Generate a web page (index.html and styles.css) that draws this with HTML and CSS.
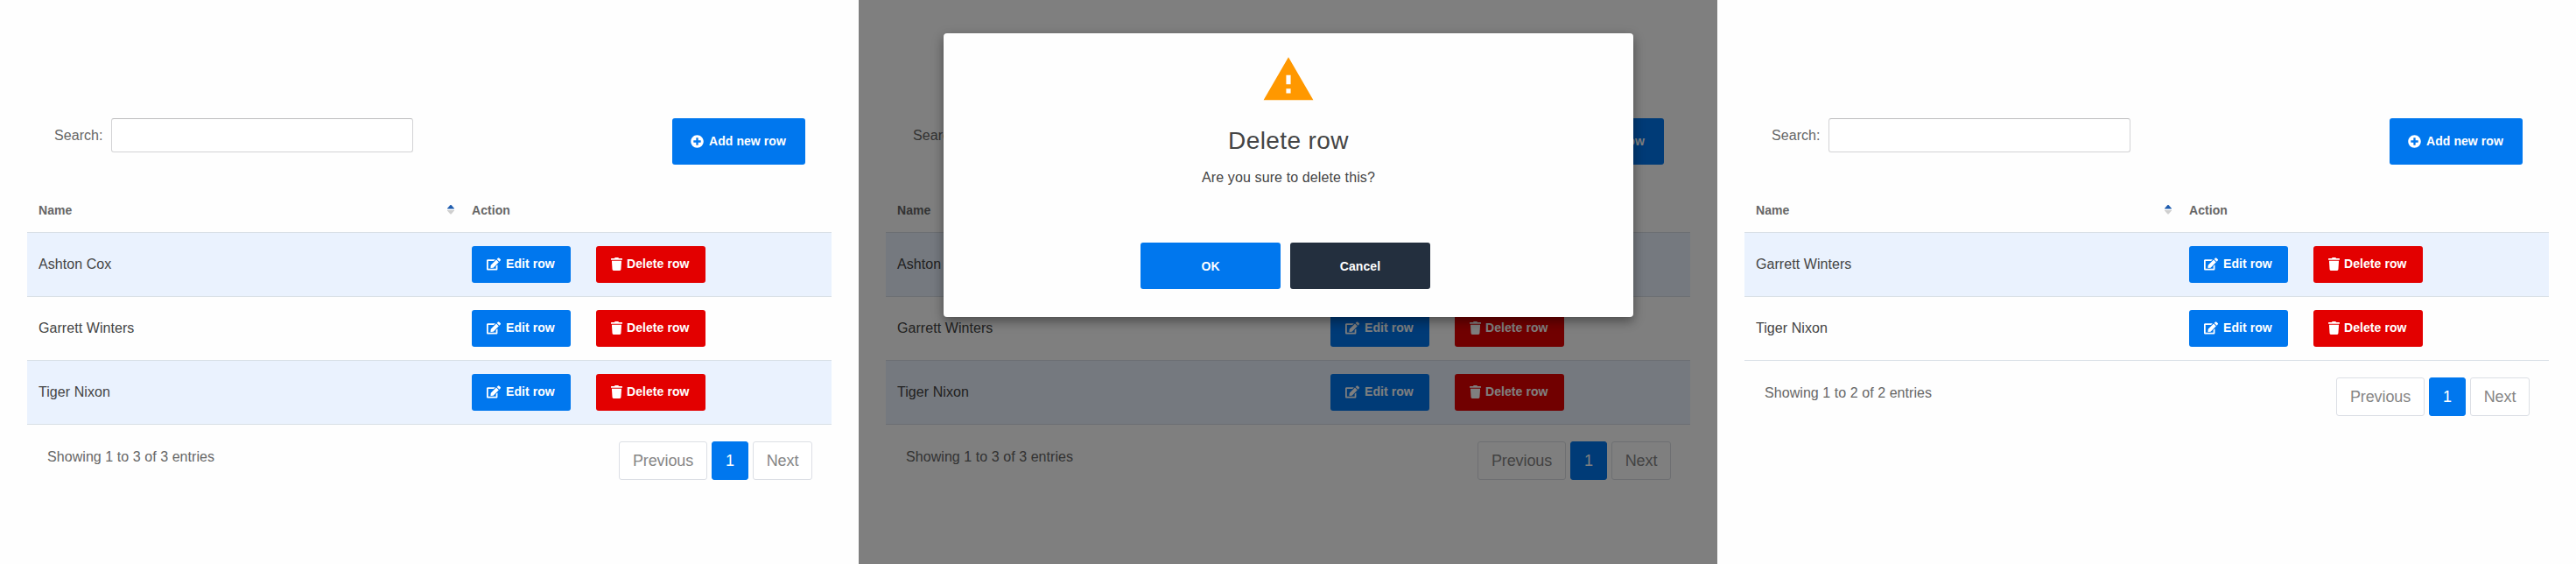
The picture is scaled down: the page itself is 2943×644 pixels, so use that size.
FILE: index.html
```html
<!DOCTYPE html>
<html lang="en">
<head>
<meta charset="utf-8">
<title>Delete row</title>
<link rel="stylesheet" href="styles.css">
</head>
<body>
<svg class="sprite" aria-hidden="true">
  <symbol id="plus" viewBox="0 0 512 512"><path fill="currentColor" d="M256 8C119 8 8 119 8 256s111 248 248 248 248-111 248-248S393 8 256 8zm144 276c0 6.600-5.400 12-12 12h-92v92c0 6.600-5.400 12-12 12h-56c-6.600 0-12-5.400-12-12v-92h-92c-6.600 0-12-5.400-12-12v-56c0-6.600 5.400-12 12-12h92v-92c0-6.600 5.400-12 12-12h56c6.600 0 12 5.400 12 12v92h92c6.600 0 12 5.400 12 12v56z"/></symbol>
  <symbol id="edit" viewBox="0 0 576 512"><path fill="currentColor" d="M402.600 83.200l90.200 90.200c3.800 3.800 3.800 10 0 13.800L274.400 405.600l-92.800 10.300c-12.400 1.400-22.900-9.100-21.500-21.500l10.300-92.800L388.800 83.200c3.800-3.800 10-3.800 13.800 0zm162-22.900l-48.800-48.800c-15.200-15.200-39.900-15.200-55.200 0l-35.400 35.400c-3.800 3.800-3.800 10 0 13.800l90.200 90.200c3.800 3.800 10 3.800 13.800 0l35.400-35.400c15.200-15.300 15.200-40 0-55.200zM384 346.200V448H64V128h229.800c3.200 0 6.200-1.300 8.500-3.500l40-40c7.600-7.600 2.200-20.500-8.500-20.500H48C21.500 64 0 85.500 0 112v352c0 26.500 21.500 48 48 48h352c26.500 0 48-21.500 48-48V306.200c0-10.700-12.900-16-20.500-8.500l-40 40c-2.200 2.300-3.500 5.300-3.500 8.500z"/></symbol>
  <symbol id="trash" viewBox="0 0 448 512"><path fill="currentColor" d="M432 32H312l-9.400-18.700A24 24 0 0 0 281.100 0H166.800a23.700 23.700 0 0 0-21.400 13.300L136 32H16A16 16 0 0 0 0 48v32a16 16 0 0 0 16 16h416a16 16 0 0 0 16-16V48a16 16 0 0 0-16-16zM53.200 467a48 48 0 0 0 47.900 45h245.800a48 48 0 0 0 47.900-45L416 128H32z"/></symbol>
  <symbol id="sort" viewBox="0 0 8 11"><path fill="#1f5cae" d="M0 4.500 V4 L3.500 0 H4.500 L8 4 V4.500z"/><path fill="#cfcfcf" d="M0 6 H8 V6.600 L4.500 10.600 H3.500 L0 6.600z"/></symbol>
  <symbol id="warning" viewBox="0 0 24 24"><path fill="#ff9800" d="M1 21h22L12 2 1 21zm12-3h-2v-2h2v2zm0-4h-2v-4h2v4z"/></symbol>
</svg>
<main class="steps">
  <section class="panel">
    <div class="toolbar">
      <label class="search">Search:<input class="search-input" type="text"></label>
      <button class="btn btn-add"><svg class="i-plus"><use href="#plus"/></svg>Add new row</button>
    </div>
    <table class="grid">
      <thead><tr><th class="col-name"><div class="sortable">Name<svg class="i-sort"><use href="#sort"/></svg></div></th><th>Action</th></tr></thead>
      <tbody>
        <tr><td>Ashton Cox</td><td><div class="actions"><button class="btn btn-edit"><svg class="i-edit"><use href="#edit"/></svg>Edit row</button><button class="btn btn-delete"><svg class="i-trash"><use href="#trash"/></svg>Delete row</button></div></td></tr>
        <tr><td>Garrett Winters</td><td><div class="actions"><button class="btn btn-edit"><svg class="i-edit"><use href="#edit"/></svg>Edit row</button><button class="btn btn-delete"><svg class="i-trash"><use href="#trash"/></svg>Delete row</button></div></td></tr>
        <tr><td>Tiger Nixon</td><td><div class="actions"><button class="btn btn-edit"><svg class="i-edit"><use href="#edit"/></svg>Edit row</button><button class="btn btn-delete"><svg class="i-trash"><use href="#trash"/></svg>Delete row</button></div></td></tr>
      </tbody>
    </table>
    <div class="footer">
      <div class="info">Showing 1 to 3 of 3 entries</div>
      <nav class="pager"><span class="page prev">Previous</span><span class="page current">1</span><span class="page next">Next</span></nav>
    </div>
  </section>

  <section class="panel">
    <div class="toolbar">
      <label class="search">Search:<input class="search-input" type="text"></label>
      <button class="btn btn-add"><svg class="i-plus"><use href="#plus"/></svg>Add new row</button>
    </div>
    <table class="grid">
      <thead><tr><th class="col-name"><div class="sortable">Name<svg class="i-sort"><use href="#sort"/></svg></div></th><th>Action</th></tr></thead>
      <tbody>
        <tr><td>Ashton Cox</td><td><div class="actions"><button class="btn btn-edit"><svg class="i-edit"><use href="#edit"/></svg>Edit row</button><button class="btn btn-delete"><svg class="i-trash"><use href="#trash"/></svg>Delete row</button></div></td></tr>
        <tr><td>Garrett Winters</td><td><div class="actions"><button class="btn btn-edit"><svg class="i-edit"><use href="#edit"/></svg>Edit row</button><button class="btn btn-delete"><svg class="i-trash"><use href="#trash"/></svg>Delete row</button></div></td></tr>
        <tr><td>Tiger Nixon</td><td><div class="actions"><button class="btn btn-edit"><svg class="i-edit"><use href="#edit"/></svg>Edit row</button><button class="btn btn-delete"><svg class="i-trash"><use href="#trash"/></svg>Delete row</button></div></td></tr>
      </tbody>
    </table>
    <div class="footer">
      <div class="info">Showing 1 to 3 of 3 entries</div>
      <nav class="pager"><span class="page prev">Previous</span><span class="page current">1</span><span class="page next">Next</span></nav>
    </div>
    <div class="overlay">
      <div class="modal" role="dialog">
        <svg class="i-warning"><use href="#warning"/></svg>
        <h2 class="modal-title">Delete row</h2>
        <p class="modal-text">Are you sure to delete this?</p>
        <div class="modal-buttons">
          <button class="btn btn-modal">OK</button>
          <button class="btn btn-modal btn-cancel">Cancel</button>
        </div>
      </div>
    </div>
  </section>

  <section class="panel">
    <div class="toolbar">
      <label class="search">Search:<input class="search-input" type="text"></label>
      <button class="btn btn-add"><svg class="i-plus"><use href="#plus"/></svg>Add new row</button>
    </div>
    <table class="grid">
      <thead><tr><th class="col-name"><div class="sortable">Name<svg class="i-sort"><use href="#sort"/></svg></div></th><th>Action</th></tr></thead>
      <tbody>
        <tr><td>Garrett Winters</td><td><div class="actions"><button class="btn btn-edit"><svg class="i-edit"><use href="#edit"/></svg>Edit row</button><button class="btn btn-delete"><svg class="i-trash"><use href="#trash"/></svg>Delete row</button></div></td></tr>
        <tr><td>Tiger Nixon</td><td><div class="actions"><button class="btn btn-edit"><svg class="i-edit"><use href="#edit"/></svg>Edit row</button><button class="btn btn-delete"><svg class="i-trash"><use href="#trash"/></svg>Delete row</button></div></td></tr>
      </tbody>
    </table>
    <div class="footer">
      <div class="info">Showing 1 to 2 of 2 entries</div>
      <nav class="pager"><span class="page prev">Previous</span><span class="page current">1</span><span class="page next">Next</span></nav>
    </div>
  </section>
</main>
</body>
</html>
```
FILE: styles.css
```css
* { box-sizing: border-box; }
body {
  margin: 0;
  background: #fefefe;
  color: #444;
  font: 16px/24px "Liberation Sans", Arial, sans-serif;
  letter-spacing: 0.06px;
}
.sprite { display: none; }
.steps { display: flex; height: 644px; overflow: hidden; }
.panel {
  position: relative;
  width: 981px;
  padding: 135px 31px 0;
}
.toolbar {
  display: flex;
  justify-content: space-between;
  align-items: flex-start;
  height: 79px;
  padding: 0 30px 0 31px;
}
.search { display: flex; align-items: center; color: #666; }
.search-input {
  width: 345px;
  height: 39px;
  margin-left: 9.5px;
  border: 1px solid #d3d3d5;
  border-top-color: #bcbcbe;
  border-radius: 3px;
  background: #fff;
}
.btn {
  display: flex;
  align-items: center;
  flex: none;
  border: 0;
  border-radius: 3px;
  padding: 0;
  background: #0077ee;
  color: #fff;
  font: bold 14px/20px "Liberation Sans", Arial, sans-serif;
  letter-spacing: 0.07px;
  white-space: nowrap;
}
.btn-add { width: 152px; height: 53px; padding: 0 0 1px 21px; }
.btn-edit { width: 113px; height: 42px; padding: 0 0 2px 17px; }
.btn-delete { width: 125px; height: 42px; padding: 0 0 2px 17px; background: #e30000; }
.i-plus { width: 15px; height: 15px; margin-right: 6px; }
.i-edit { width: 16px; height: 15px; margin-right: 6px; }
.i-trash { width: 13px; height: 15px; margin-right: 5px; }
.grid {
  width: 919px;
  table-layout: fixed;
  border-collapse: separate;
  border-spacing: 0;
}
.grid th, .grid td {
  padding: 0 13px;
  border-bottom: 1px solid #d8dfe6;
  text-align: left;
  vertical-align: middle;
}
.grid th { height: 52px; color: #666; font-size: 14px; }
.grid td { height: 73px; }
.col-name { width: 495px; }
.sortable { display: flex; align-items: center; justify-content: space-between; }
.i-sort { width: 8px; height: 11px; margin-right: -6px; }
.grid tbody tr:nth-child(odd) { background: #eaf2fe; }
.actions { display: flex; gap: 29px; }
.footer {
  display: flex;
  justify-content: space-between;
  align-items: flex-start;
  padding: 19px 22px 0 23px;
}
.info { padding-top: 6px; color: #666; }
.pager { display: flex; gap: 5px; letter-spacing: -0.1px; }
.page {
  height: 44px;
  border: 1px solid #dcdfe5;
  border-radius: 3px;
  color: #868686;
  font-size: 18px;
  line-height: 42px;
  text-align: center;
  background: #fff;
}
.prev { width: 101px; }
.next { width: 68px; }
.current { width: 42px; border-color: #0077ee; background: #0077ee; color: #fff; }
.overlay {
  position: absolute;
  inset: 0;
  padding: 38px 96px 0 97px;
  background: rgba(0, 0, 0, 0.5);
}
.modal {
  display: flex;
  flex-direction: column;
  align-items: center;
  height: 324px;
  padding-top: 22px;
  border-radius: 4px;
  background: #fefefe;
  box-shadow: 0 5px 11px rgba(0, 0, 0, 0.25), 0 4px 15px rgba(0, 0, 0, 0.18);
}
.i-warning { width: 62px; height: 62px; }
.modal-title {
  margin: 21px 0 0;
  font-size: 28px;
  font-weight: 400;
  line-height: 36px;
  letter-spacing: 0.4px;
}
.modal-text { margin: 12px 0 0; letter-spacing: 0.11px; }
.modal-buttons { display: flex; gap: 11px; margin: 62px 7px 0 0; }
.btn-modal { justify-content: center; width: 160px; height: 53px; }
.btn-cancel { background: #232f3e; }
```
